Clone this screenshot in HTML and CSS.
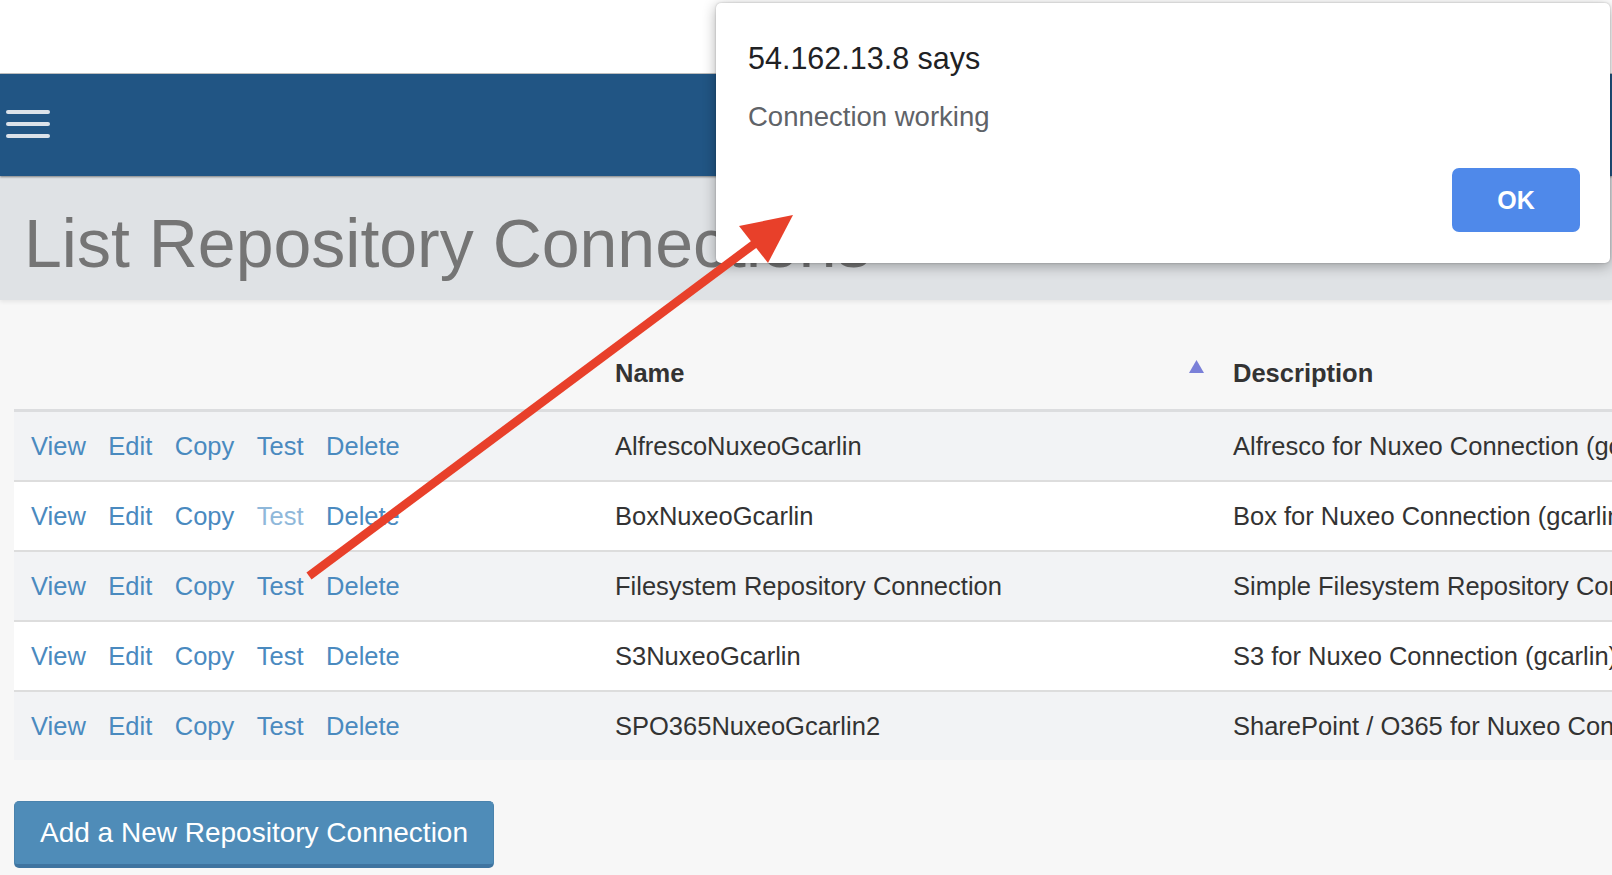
FILE: index.html
```html
<!DOCTYPE html>
<html lang="en">
<head>
<meta charset="utf-8">
<title>List Repository Connections</title>
<link rel="stylesheet" href="styles.css">
</head>
<body>
<div class="topstrip"></div>
<header class="navbar">
  <button class="hamburger" aria-label="Menu">
    <span class="bar"></span><span class="bar"></span><span class="bar"></span>
  </button>
</header>
<div class="titleband">
  <h1 class="page-title">List Repository Connections</h1>
</div>
<main class="content">
  <table class="conn-table">
    <colgroup>
      <col class="col-actions">
      <col class="col-name">
      <col class="col-desc">
    </colgroup>
    <thead>
      <tr>
        <th></th>
        <th class="sortable"><div class="th-inner"><span>Name</span><svg class="sort-icon" width="15" height="13" viewBox="0 0 15 13"><polygon points="7.5,0 15,13 0,13" fill="#7a80d8"/></svg></div></th>
        <th>Description</th>
      </tr>
    </thead>
    <tbody>
      <tr class="odd">
        <td><div class="actions"><a href="#">View</a><a href="#">Edit</a><a href="#">Copy</a><a href="#">Test</a><a href="#">Delete</a></div></td>
        <td>AlfrescoNuxeoGcarlin</td>
        <td>Alfresco for Nuxeo Connection (gcarlin)</td>
      </tr>
      <tr>
        <td><div class="actions"><a href="#">View</a><a href="#">Edit</a><a href="#">Copy</a><a href="#" class="visited">Test</a><a href="#">Delete</a></div></td>
        <td>BoxNuxeoGcarlin</td>
        <td>Box for Nuxeo Connection (gcarlin)</td>
      </tr>
      <tr class="odd">
        <td><div class="actions"><a href="#">View</a><a href="#">Edit</a><a href="#">Copy</a><a href="#">Test</a><a href="#">Delete</a></div></td>
        <td>Filesystem Repository Connection</td>
        <td>Simple Filesystem Repository Connection</td>
      </tr>
      <tr>
        <td><div class="actions"><a href="#">View</a><a href="#">Edit</a><a href="#">Copy</a><a href="#">Test</a><a href="#">Delete</a></div></td>
        <td>S3NuxeoGcarlin</td>
        <td>S3 for Nuxeo Connection (gcarlin)</td>
      </tr>
      <tr class="odd">
        <td><div class="actions"><a href="#">View</a><a href="#">Edit</a><a href="#">Copy</a><a href="#">Test</a><a href="#">Delete</a></div></td>
        <td>SPO365NuxeoGcarlin2</td>
        <td>SharePoint / O365 for Nuxeo Connection (gcarlin)</td>
      </tr>
    </tbody>
  </table>
  <button class="add-btn">Add a New Repository Connection</button>
</main>

<div class="dialog" role="alertdialog">
  <div class="dialog-title">54.162.13.8 says</div>
  <div class="dialog-msg">Connection working</div>
  <div class="dialog-footer"><button class="ok-btn">OK</button></div>
</div>

<svg class="annotation" width="1612" height="875" viewBox="0 0 1612 875">
  <line x1="309" y1="576" x2="757" y2="242" stroke="#e8402a" stroke-width="8.5"/>
  <polygon points="793,215 739,226 768,263" fill="#e8402a"/>
</svg>
</body>
</html>
```

FILE: styles.css
```css
html, body {
  margin: 0;
  padding: 0;
  overflow: hidden;
}
body {
  font-family: "Liberation Sans", Arial, Helvetica, sans-serif;
  background: #f7f7f7;
  color: #333;
  width: 1612px;
  height: 875px;
  position: relative;
}
.topstrip {
  height: 73px;
  background: #fff;
  border-bottom: 1px solid #c4c4c4;
}
.navbar {
  height: 102px;
  background: #215584;
  position: relative;
  z-index: 1;
  box-shadow: 0 1px 2px rgba(0, 0, 0, 0.45);
  display: flex;
  align-items: flex-start;
}
.hamburger {
  margin: 36px 0 0 6px;
  padding: 0;
  border: 0;
  background: transparent;
  display: flex;
  flex-direction: column;
  gap: 8px;
}
.hamburger .bar {
  display: block;
  width: 44px;
  height: 4px;
  border-radius: 2px;
  background: #dbe2ea;
}
.titleband {
  height: 124px;
  background: #dfe2e5;
  box-shadow: 0 2px 4px rgba(0, 0, 0, 0.07);
  position: relative;
}
.page-title {
  margin: 0;
  padding: 33px 0 0 24px;
  font-size: 68px;
  line-height: 69px;
  font-weight: normal;
  color: #757575;
  white-space: nowrap;
}
.content {
  padding: 39px 0 0 14px;
}
.conn-table {
  table-layout: fixed;
  width: 1902px;
  border-collapse: collapse;
  font-size: 25.5px;
}
.col-actions { width: 584px; }
.col-name { width: 618px; }
.col-desc { width: 700px; }
.conn-table th {
  text-align: left;
  font-weight: bold;
  line-height: 36px;
  padding: 16px 17px 18px;
  border-bottom: 3px solid #dcdddf;
  white-space: nowrap;
}
.conn-table th.sortable {
  padding-right: 12px;
}
.th-inner {
  display: flex;
  justify-content: space-between;
  align-items: flex-start;
}
.sort-icon {
  margin-top: 5px;
}
.conn-table td {
  line-height: 36px;
  padding: 16px 17px;
  border-top: 2px solid #dddddd;
  white-space: nowrap;
  overflow: hidden;
  background: #fff;
}
.conn-table tr.odd td {
  background: #f2f3f5;
}
.actions {
  display: flex;
  gap: 22.5px;
}
.actions a {
  color: #4a8abf;
  text-decoration: none;
}
.actions a.visited {
  color: #8fb8da;
}
.add-btn {
  margin-top: 41px;
  font-family: inherit;
  font-size: 28px;
  line-height: 40px;
  color: #fff;
  background: #4f8cb8;
  border: 1px solid #4a83ad;
  border-bottom: 4px solid #3f74a0;
  border-radius: 5px;
  padding: 11px 25px 11px 25px;
  cursor: pointer;
}
.dialog {
  position: absolute;
  top: 3px;
  left: 716px;
  width: 894px;
  height: 260px;
  box-sizing: border-box;
  background: #fff;
  border-radius: 5px;
  box-shadow: 0 3px 14px rgba(0, 0, 0, 0.32), 0 0 2px rgba(0, 0, 0, 0.25);
  padding: 37px 30px 31px 32px;
  display: flex;
  flex-direction: column;
  z-index: 5;
}
.dialog-title {
  font-size: 30.5px;
  line-height: 36px;
  color: #202124;
}
.dialog-msg {
  margin-top: 25px;
  font-size: 27.5px;
  line-height: 32px;
  color: #5f6368;
}
.dialog-footer {
  margin-top: auto;
  display: flex;
  justify-content: flex-end;
}
.ok-btn {
  width: 128px;
  height: 64px;
  border: 0;
  border-radius: 7px;
  background: #4f89ea;
  color: #fff;
  font-family: inherit;
  font-weight: bold;
  font-size: 25px;
}
.annotation {
  position: absolute;
  top: 0;
  left: 0;
  pointer-events: none;
  z-index: 10;
}
```
